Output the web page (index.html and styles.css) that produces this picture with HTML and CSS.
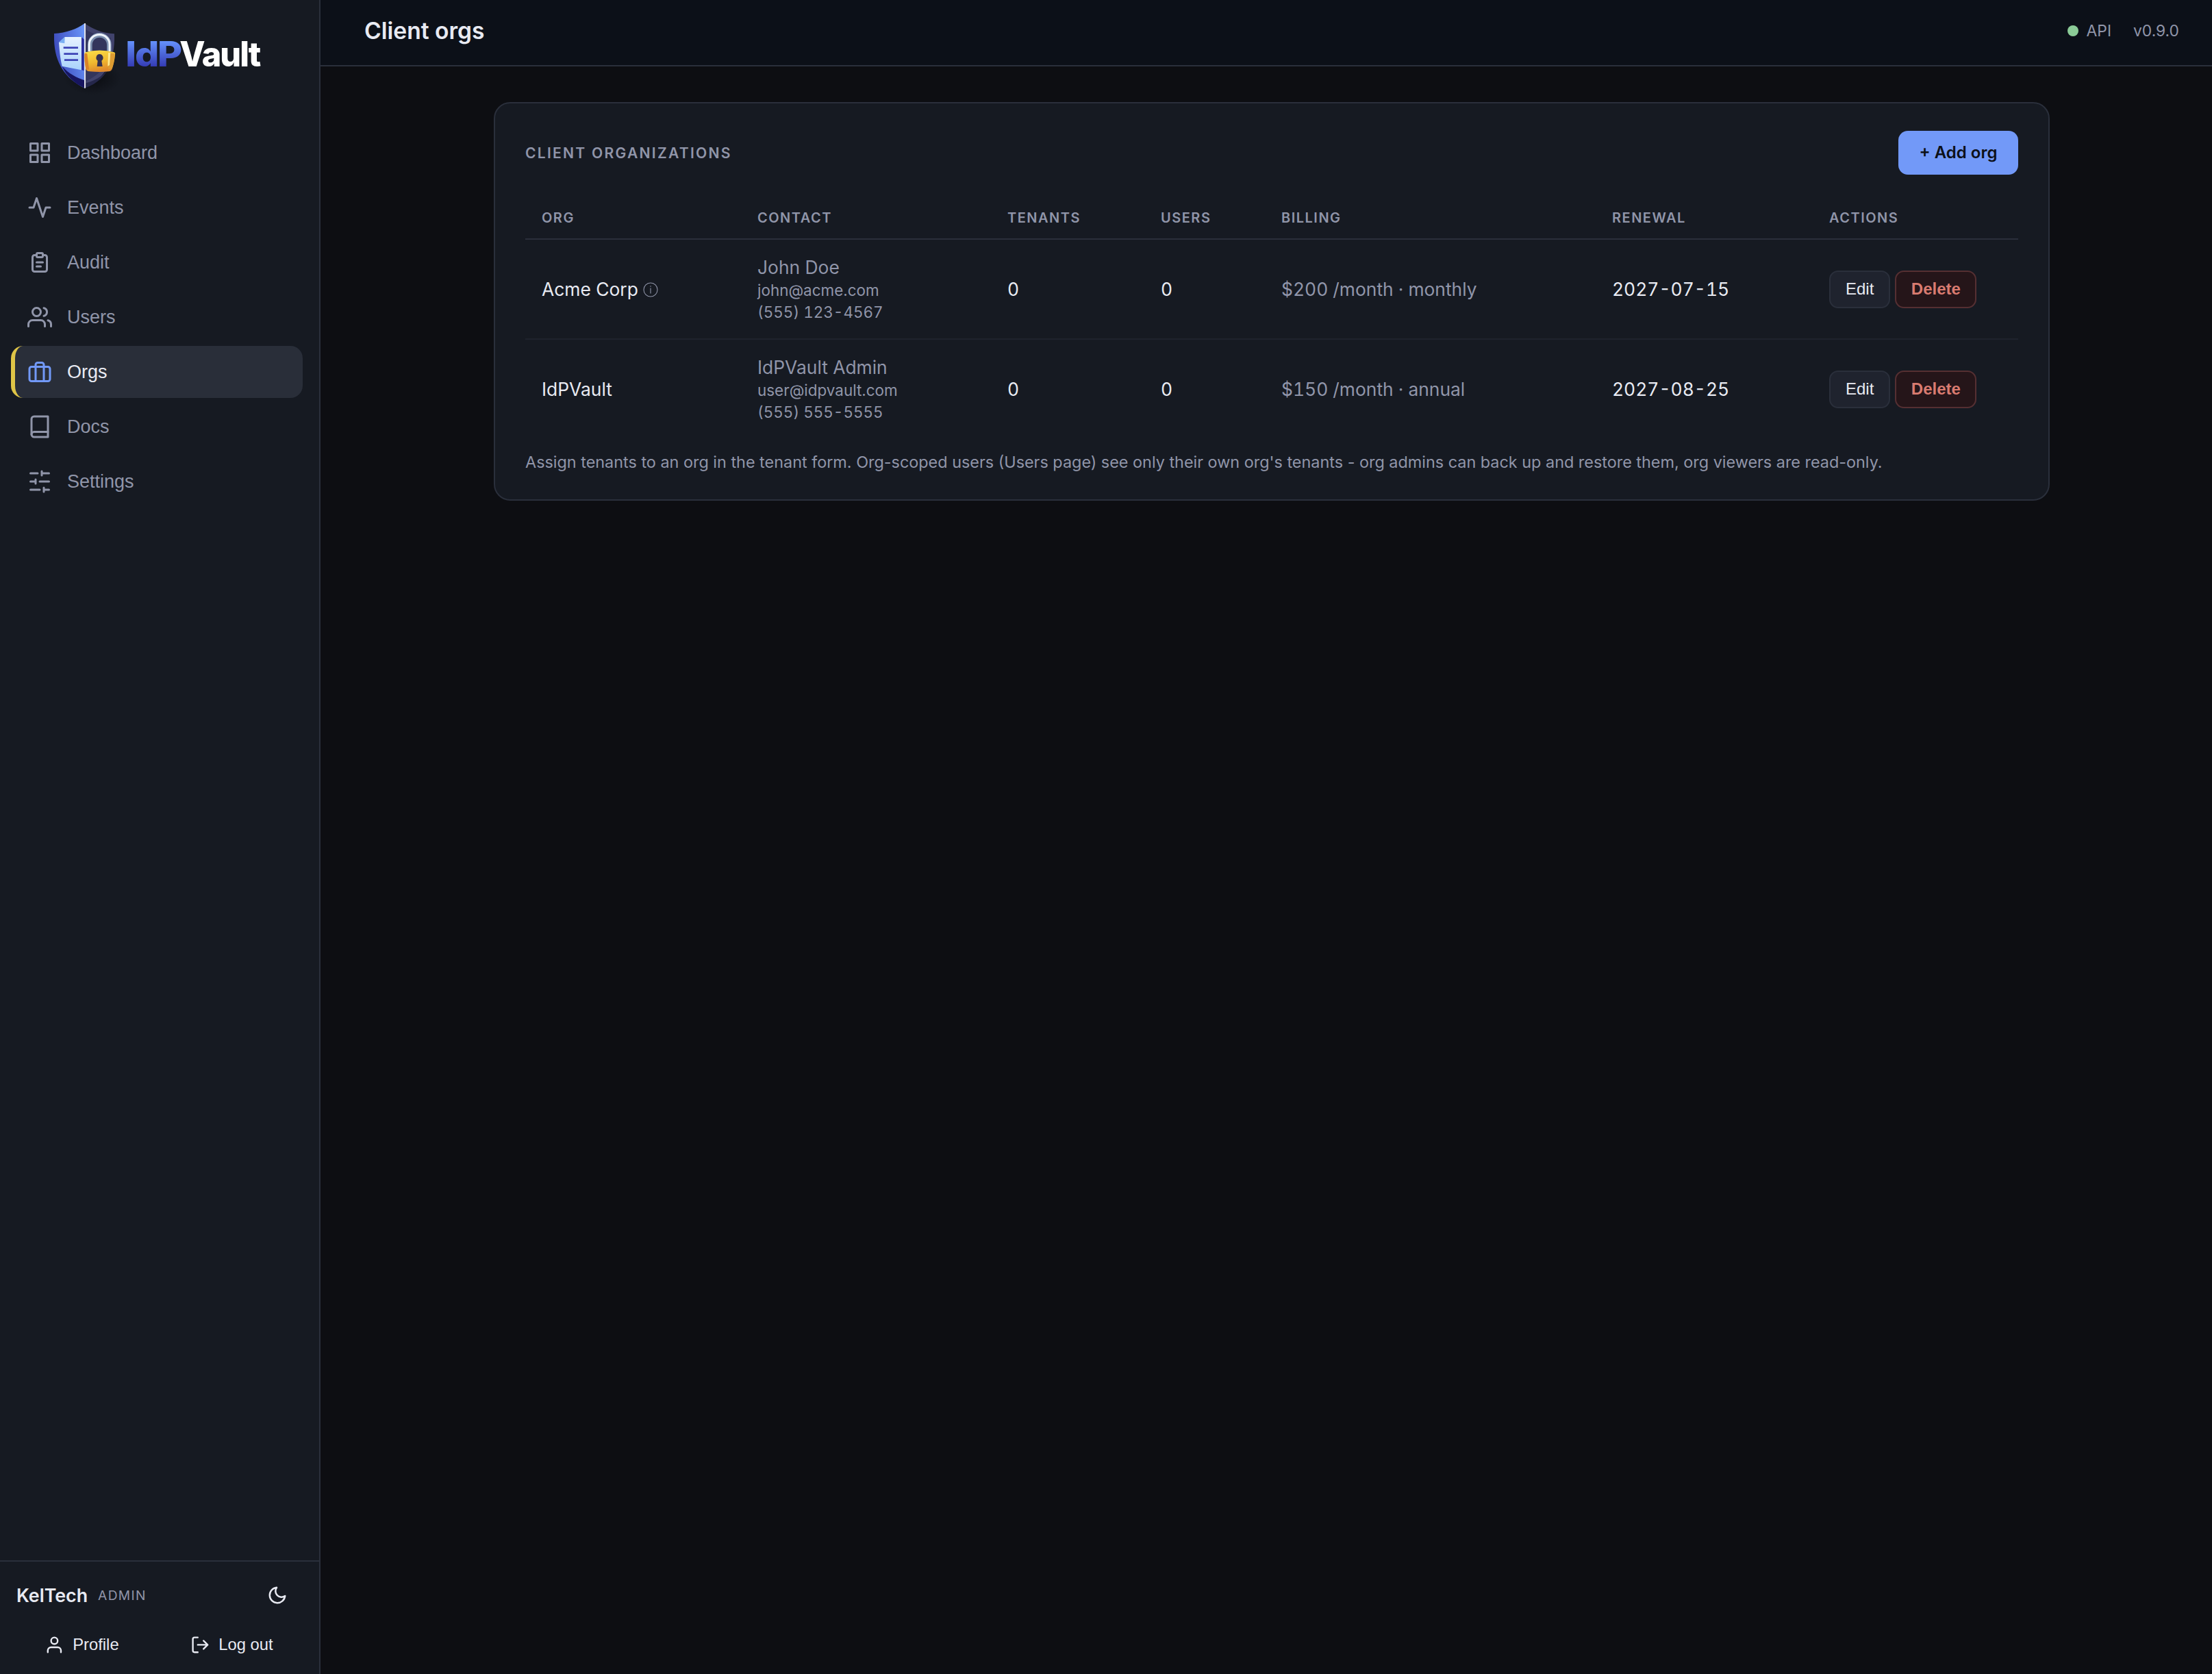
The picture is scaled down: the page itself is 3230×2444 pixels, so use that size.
FILE: index.html
```html
<!DOCTYPE html>
<html lang="en">
<head>
    <meta charset="UTF-8">
    <meta name="viewport" content="width=device-width, initial-scale=1.0">
    <title>Client orgs - IdPVault</title>
    <link rel="stylesheet" href="styles.css">
</head>
<body>

    <div class="layout">
        <aside class="sidebar">
            <!-- Brand -->
            <div class="brand">
                <svg class="logo" viewBox="225 90 930 330" role="img" aria-label="IdPVault">
                    <defs>
                        <linearGradient id="shieldLeft" x1="0" y1="0.6" x2="1" y2="0.2">
                            <stop offset="0" stop-color="#3a46b8"/>
                            <stop offset="1" stop-color="#6793f8"/>
                        </linearGradient>
                        <linearGradient id="paper" x1="0" y1="0" x2="0" y2="1">
                            <stop offset="0" stop-color="#e6f3ff"/>
                            <stop offset="1" stop-color="#a9d2fb"/>
                        </linearGradient>
                        <linearGradient id="lockBody" x1="0" y1="0" x2="0.3" y2="1">
                            <stop offset="0" stop-color="#fbe04a"/>
                            <stop offset="0.6" stop-color="#f0b92f"/>
                            <stop offset="1" stop-color="#e08a2c"/>
                        </linearGradient>
                        <linearGradient id="wordmark" x1="0" y1="0" x2="0" y2="1">
                            <stop offset="0.2" stop-color="#6592fb"/>
                            <stop offset="0.85" stop-color="#3136b0"/>
                        </linearGradient>
                        <radialGradient id="shade">
                            <stop offset="0" stop-color="#0a0c11"/>
                            <stop offset="1" stop-color="#0a0c11" stop-opacity="0"/>
                        </radialGradient>
                    </defs>
                    <ellipse cx="405" cy="340" rx="125" ry="75" fill="url(#shade)"/>
                    <path d="M371 102C338 127 290 144 237 147V175C240 275 285 345 371 386Z" fill="url(#shieldLeft)"/>
                    <path d="M272 290C300 322 335 340 371 352V386C325 364 290 332 272 290Z" fill="#17155f"/>
                    <path d="M371 102C404 127 450 146 501 148V175C499 275 457 345 371 386Z" fill="#41436c"/>
                    <path d="M377 130C408 150 445 163 486 166C488 250 460 320 377 355Z" fill="#33355c"/>
                    <path d="M377 364C425 350 462 325 480 290C460 335 425 365 377 384Z" fill="#25274b"/>
                    <path d="M357 163L368 172V309L357 307Z" fill="#2b2d9c"/>
                    <path d="M284 162H357V307L272 290C265 262 261 230 258 186Z" fill="url(#paper)"/>
                    <path d="M284 162L283 190L258 186Z" fill="#79b0f3"/>
                    <path d="M278 209H342M280 236H342M282 263H342" stroke="#3c44b6" stroke-width="8"/>
                    <path d="M372 102V386" stroke="#ffffff" stroke-width="5"/>
                    <path d="M394 225V196A42 42 0 0 1 478 196V225" fill="none" stroke="#7b8fae" stroke-width="20"/>
                    <path d="M391 225V194A44 42 0 0 1 480 194V225" fill="none" stroke="#eef3fa" stroke-width="9"/>
                    <path d="M374 229Q436 212 500 229Q506 231 504 240C502 265 497 285 491 302Q487 312 476 313Q436 317 394 313Q378 311 376 302C371 280 370 258 370 236Q370 231 374 229Z" fill="url(#lockBody)"/>
                    <path d="M371 236Q374 231 382 236L390 303Q379 309 376 301C372 280 370 258 371 236Z" fill="#d98229"/>
                    <path d="M478 232L503 235C502 262 497 282 491 300L474 303Z" fill="#dd9c32"/>
                    <path d="M474 231L484 230L480 285L472 290Z" fill="#ffe98d"/>
                    <path d="M436 237A16 16 0 0 1 445 266L449 291H425L428 266A16 16 0 0 1 436 237Z" fill="#34304e"/>
                    <text class="word" x="550" y="290" textLength="242" lengthAdjust="spacingAndGlyphs" fill="url(#wordmark)">IdP</text>
                    <text class="word" x="787" y="290" textLength="351" lengthAdjust="spacingAndGlyphs" fill="#ffffff">Vault</text>
                </svg>
            </div>

            <!-- Navigation -->
            <nav class="nav">
                <button class="nav-item">
                    <svg class="icon" viewBox="0 0 24 24"><rect x="3" y="3" width="7" height="7"/><rect x="14" y="3" width="7" height="7"/><rect x="3" y="14" width="7" height="7"/><rect x="14" y="14" width="7" height="7"/></svg>
                    Dashboard
                </button>
                <button class="nav-item">
                    <svg class="icon" viewBox="0 0 24 24"><path d="M22 12h-4l-3 9L9 3l-3 9H2"/></svg>
                    Events
                </button>
                <button class="nav-item">
                    <svg class="icon" viewBox="0 0 24 24"><path d="M9 5H7a2 2 0 0 0-2 2v12a2 2 0 0 0 2 2h10a2 2 0 0 0 2-2V7a2 2 0 0 0-2-2h-2"/><rect x="9" y="3" width="6" height="4" rx="1"/><path d="M9 12h6M9 16h4"/></svg>
                    Audit
                </button>
                <button class="nav-item">
                    <svg class="icon" viewBox="0 0 24 24"><path d="M17 21v-2a4 4 0 0 0-4-4H5a4 4 0 0 0-4 4v2"/><circle cx="9" cy="7" r="4"/><path d="M23 21v-2a4 4 0 0 0-3-3.87M16 3.13a4 4 0 0 1 0 7.75"/></svg>
                    Users
                </button>
                <button class="nav-item active">
                    <svg class="icon" viewBox="0 0 24 24"><rect x="2" y="7" width="20" height="14" rx="2"/><path d="M16 21V5a2 2 0 0 0-2-2h-4a2 2 0 0 0-2 2v16"/></svg>
                    Orgs
                </button>
                <button class="nav-item">
                    <svg class="icon" viewBox="0 0 24 24"><path d="M4 19.5A2.5 2.5 0 0 1 6.5 17H20"/><path d="M6.5 2H20v20H6.5A2.5 2.5 0 0 1 4 19.5v-15A2.5 2.5 0 0 1 6.5 2z"/></svg>
                    Docs
                </button>
                <button class="nav-item">
                    <svg class="icon" viewBox="0 0 24 24"><path d="M21 4h-7M10 4H3M21 12h-9M8 12H3M21 20h-5M12 20H3M14 2v4M8 10v4M16 18v4"/></svg>
                    Settings
                </button>
            </nav>

            <!-- Signed-in user -->
            <div class="sidebar-footer">
                <div class="user-row">
                    <span class="user-name">KelTech</span>
                    <span class="user-role">Admin</span>
                    <button class="theme-toggle" aria-label="Toggle theme">
                        <svg class="icon" viewBox="0 0 24 24"><path d="M21 12.79A9 9 0 1 1 11.21 3 7 7 0 0 0 21 12.79z"/></svg>
                    </button>
                </div>
                <div class="user-actions">
                    <button class="user-btn">
                        <svg class="icon" viewBox="0 0 24 24"><path d="M20 21v-2a4 4 0 0 0-4-4H8a4 4 0 0 0-4 4v2"/><circle cx="12" cy="7" r="4"/></svg>
                        Profile
                    </button>
                    <button class="user-btn">
                        <svg class="icon" viewBox="0 0 24 24"><path d="M9 21H5a2 2 0 0 1-2-2V5a2 2 0 0 1 2-2h4M16 17l5-5-5-5M21 12H9"/></svg>
                        Log out
                    </button>
                </div>
            </div>
        </aside>

        <div class="content">
            <header class="topbar">
                <h1>Client orgs</h1>
                <div class="status">
                    <span class="api"><span class="dot"></span>API</span>
                    <span>v0.9.0</span>
                </div>
            </header>

            <main class="main">
                <section class="card">
                    <div class="card-header">
                        <h2>Client organizations</h2>
                        <button class="btn btn-primary">+ Add org</button>
                    </div>

                    <table class="orgs">
                        <colgroup>
                            <col class="col-org">
                            <col class="col-contact">
                            <col class="col-tenants">
                            <col class="col-users">
                            <col class="col-billing">
                            <col class="col-renewal">
                            <col class="col-actions">
                        </colgroup>
                        <thead>
                            <tr>
                                <th>Org</th>
                                <th>Contact</th>
                                <th>Tenants</th>
                                <th>Users</th>
                                <th>Billing</th>
                                <th>Renewal</th>
                                <th>Actions</th>
                            </tr>
                        </thead>
                        <tbody>
                            <tr>
                                <td>Acme Corp <svg class="info" viewBox="0 0 22 22"><circle cx="11" cy="11" r="10"/><path d="M11 8.5v8M11 5.2v1.6"/></svg></td>
                                <td class="muted">
                                    <div class="contact-name">John Doe</div>
                                    <div class="contact-line">john@acme.com</div>
                                    <div class="contact-line num">(555) 123-4567</div>
                                </td>
                                <td class="num">0</td>
                                <td class="num">0</td>
                                <td class="muted num">$200 /month · monthly</td>
                                <td class="num">2027-07-15</td>
                                <td>
                                    <div class="row-actions">
                                        <button class="btn btn-small">Edit</button>
                                        <button class="btn btn-small btn-danger">Delete</button>
                                    </div>
                                </td>
                            </tr>
                            <tr>
                                <td>IdPVault</td>
                                <td class="muted">
                                    <div class="contact-name">IdPVault Admin</div>
                                    <div class="contact-line">user@idpvault.com</div>
                                    <div class="contact-line num">(555) 555-5555</div>
                                </td>
                                <td class="num">0</td>
                                <td class="num">0</td>
                                <td class="muted num">$150 /month · annual</td>
                                <td class="num">2027-08-25</td>
                                <td>
                                    <div class="row-actions">
                                        <button class="btn btn-small">Edit</button>
                                        <button class="btn btn-small btn-danger">Delete</button>
                                    </div>
                                </td>
                            </tr>
                        </tbody>
                    </table>

                    <p class="note">Assign tenants to an org in the tenant form. Org-scoped users (Users page) see only their own org's tenants - org admins can back up and restore them, org viewers are read-only.</p>
                </section>
            </main>
        </div>
    </div>

</body>
</html>
```
FILE: styles.css
```css
:root {
    --bg: #0d0e12;
    --bg-top: #0c1018;
    --panel: #161a22;
    --panel-2: #1f232e;
    --border: #2a2f3b;
    --text: #e8eaf2;
    --muted: #9095a9;
    --accent: #7299f8;
    --yellow: #dfc547;
}
* {
    box-sizing: border-box;
}
body {
    margin: 0;
    background: var(--bg);
    color: var(--text);
    font-family: Inter, sans-serif;
    font-size: 26.4px;
}
button {
    font-family: "Liberation Sans", Arial, sans-serif;
    border: none;
    background: none;
    color: inherit;
    cursor: pointer;
}
.layout {
    display: flex;
    height: 2444px;
}
.icon {
    width: 36px;
    height: 36px;
    flex: none;
    fill: none;
    stroke: currentColor;
    stroke-width: 2;
    stroke-linecap: round;
    stroke-linejoin: round;
}

/* Sidebar */
.sidebar {
    width: 468px;
    flex: none;
    display: flex;
    flex-direction: column;
    background: var(--panel);
    border-right: 2px solid var(--border);
}
.brand {
    height: 185px;
    padding: 30px 0 0 75px;
}
.logo {
    display: block;
    width: 310px;
    height: 110px;
    overflow: visible;
}
.word {
    font-family: Inter, sans-serif;
    font-size: 151px;
    font-weight: 800;
    letter-spacing: -6px;
}
.nav {
    flex: 1;
    display: flex;
    flex-direction: column;
    gap: 4px;
    padding: 0 24px 0 16px;
}
.nav-item {
    display: flex;
    align-items: center;
    gap: 22px;
    height: 76px;
    padding: 0 18px;
    border-left: 6px solid transparent;
    border-radius: 18px;
    color: var(--muted);
    font-size: 27px;
}
.nav-item.active {
    background: #292e39;
    border-left-color: var(--yellow);
    color: var(--text);
}
.nav-item.active .icon {
    color: var(--accent);
}
.sidebar-footer {
    height: 166px;
    border-top: 2px solid var(--border);
    padding: 20px 24px 0 16px;
}
.user-row {
    display: flex;
    align-items: center;
    height: 58px;
    padding: 0 22px 0 8px;
}
.user-name {
    font-weight: 600;
    font-size: 26.8px;
}
.user-role {
    margin-left: 15px;
    color: var(--muted);
    font-size: 19.2px;
    letter-spacing: 1.3px;
    text-transform: uppercase;
}
.theme-toggle {
    margin-left: auto;
    padding: 0;
    display: flex;
}
.theme-toggle .icon {
    width: 30px;
    height: 30px;
}
.user-actions {
    display: flex;
    gap: 12px;
    margin-top: 15px;
}
.user-btn {
    flex: 1;
    display: flex;
    align-items: center;
    justify-content: center;
    gap: 12px;
    height: 56px;
    padding: 0;
    font-size: 23.8px;
}
.user-btn .icon {
    width: 28.8px;
    height: 28.8px;
}

/* Top bar */
.content {
    flex: 1;
}
.topbar {
    display: flex;
    align-items: center;
    justify-content: space-between;
    height: 97px;
    padding: 0 48px 6px 64px;
    background: var(--bg-top);
    border-bottom: 2px solid var(--border);
}
.topbar h1 {
    margin: 0;
    font-size: 33.6px;
    font-weight: 600;
}
.status {
    display: flex;
    gap: 32px;
    color: var(--muted);
    font-size: 22.8px;
}
.api {
    display: flex;
    align-items: center;
    gap: 12px;
}
.dot {
    width: 16px;
    height: 16px;
    border-radius: 50%;
    background: #8bcb97;
}

/* Card */
.main {
    padding: 52px 48px 0 64px;
}
.card {
    max-width: 2272px;
    height: 582px;
    margin: 0 auto;
    padding: 40px 44px 0;
    background: var(--panel);
    border: 2px solid var(--border);
    border-radius: 24px;
}
.card-header {
    display: flex;
    align-items: center;
    justify-content: space-between;
    margin-bottom: 32px;
}
.card-header h2 {
    margin: 0;
    color: var(--muted);
    font-size: 21.1px;
    font-weight: 600;
    letter-spacing: 2.25px;
    text-transform: uppercase;
}
.btn {
    border: 2px solid var(--border);
    border-radius: 14px;
    background: var(--panel-2);
    font-size: 24px;
}
.btn-primary {
    width: 175px;
    height: 64px;
    padding: 0 0 1px;
    border: none;
    background: var(--accent);
    color: #0c1018;
    font-family: Inter, sans-serif;
    font-weight: 600;
}
.btn-small {
    height: 55px;
    padding: 0 22px 1px;
    border-radius: 13px;
}
.btn-danger {
    padding: 0 21.5px 1px;
    background: #251519;
    border-color: #552f32;
    color: #d97b70;
    font-weight: bold;
}

/* Orgs table */
.orgs {
    width: 100%;
    table-layout: fixed;
    border-collapse: separate;
    border-spacing: 0;
}
.col-org { width: 315px; }
.col-contact { width: 365px; }
.col-tenants { width: 224px; }
.col-users { width: 176px; }
.col-billing { width: 483px; }
.col-renewal { width: 317px; }
.col-actions { width: 300px; }
.orgs th {
    height: 63px;
    padding: 0 24px;
    text-align: left;
    color: var(--muted);
    font-size: 20px;
    font-weight: 600;
    letter-spacing: 1.5px;
    text-transform: uppercase;
    border-bottom: 2px solid var(--border);
}
.orgs td {
    height: 146px;
    padding: 0 24px;
    vertical-align: middle;
    border-bottom: 2px solid #1f232d;
}
.orgs tr:last-child td {
    height: 144px;
    border-bottom: none;
}
.orgs .muted {
    color: var(--muted);
}
.num {
    font-variant-numeric: tabular-nums;
}
.contact-name {
    line-height: 35px;
}
.contact-line {
    font-size: 22.44px;
    line-height: 32px;
}
.info {
    width: 22px;
    height: 22px;
    vertical-align: -2px;
    fill: none;
    stroke: var(--muted);
    stroke-width: 1.1;
}
.row-actions {
    display: flex;
    gap: 7px;
}
.note {
    margin: 19px 0 0;
    color: var(--muted);
    font-size: 23.4px;
    line-height: 32px;
}
```
